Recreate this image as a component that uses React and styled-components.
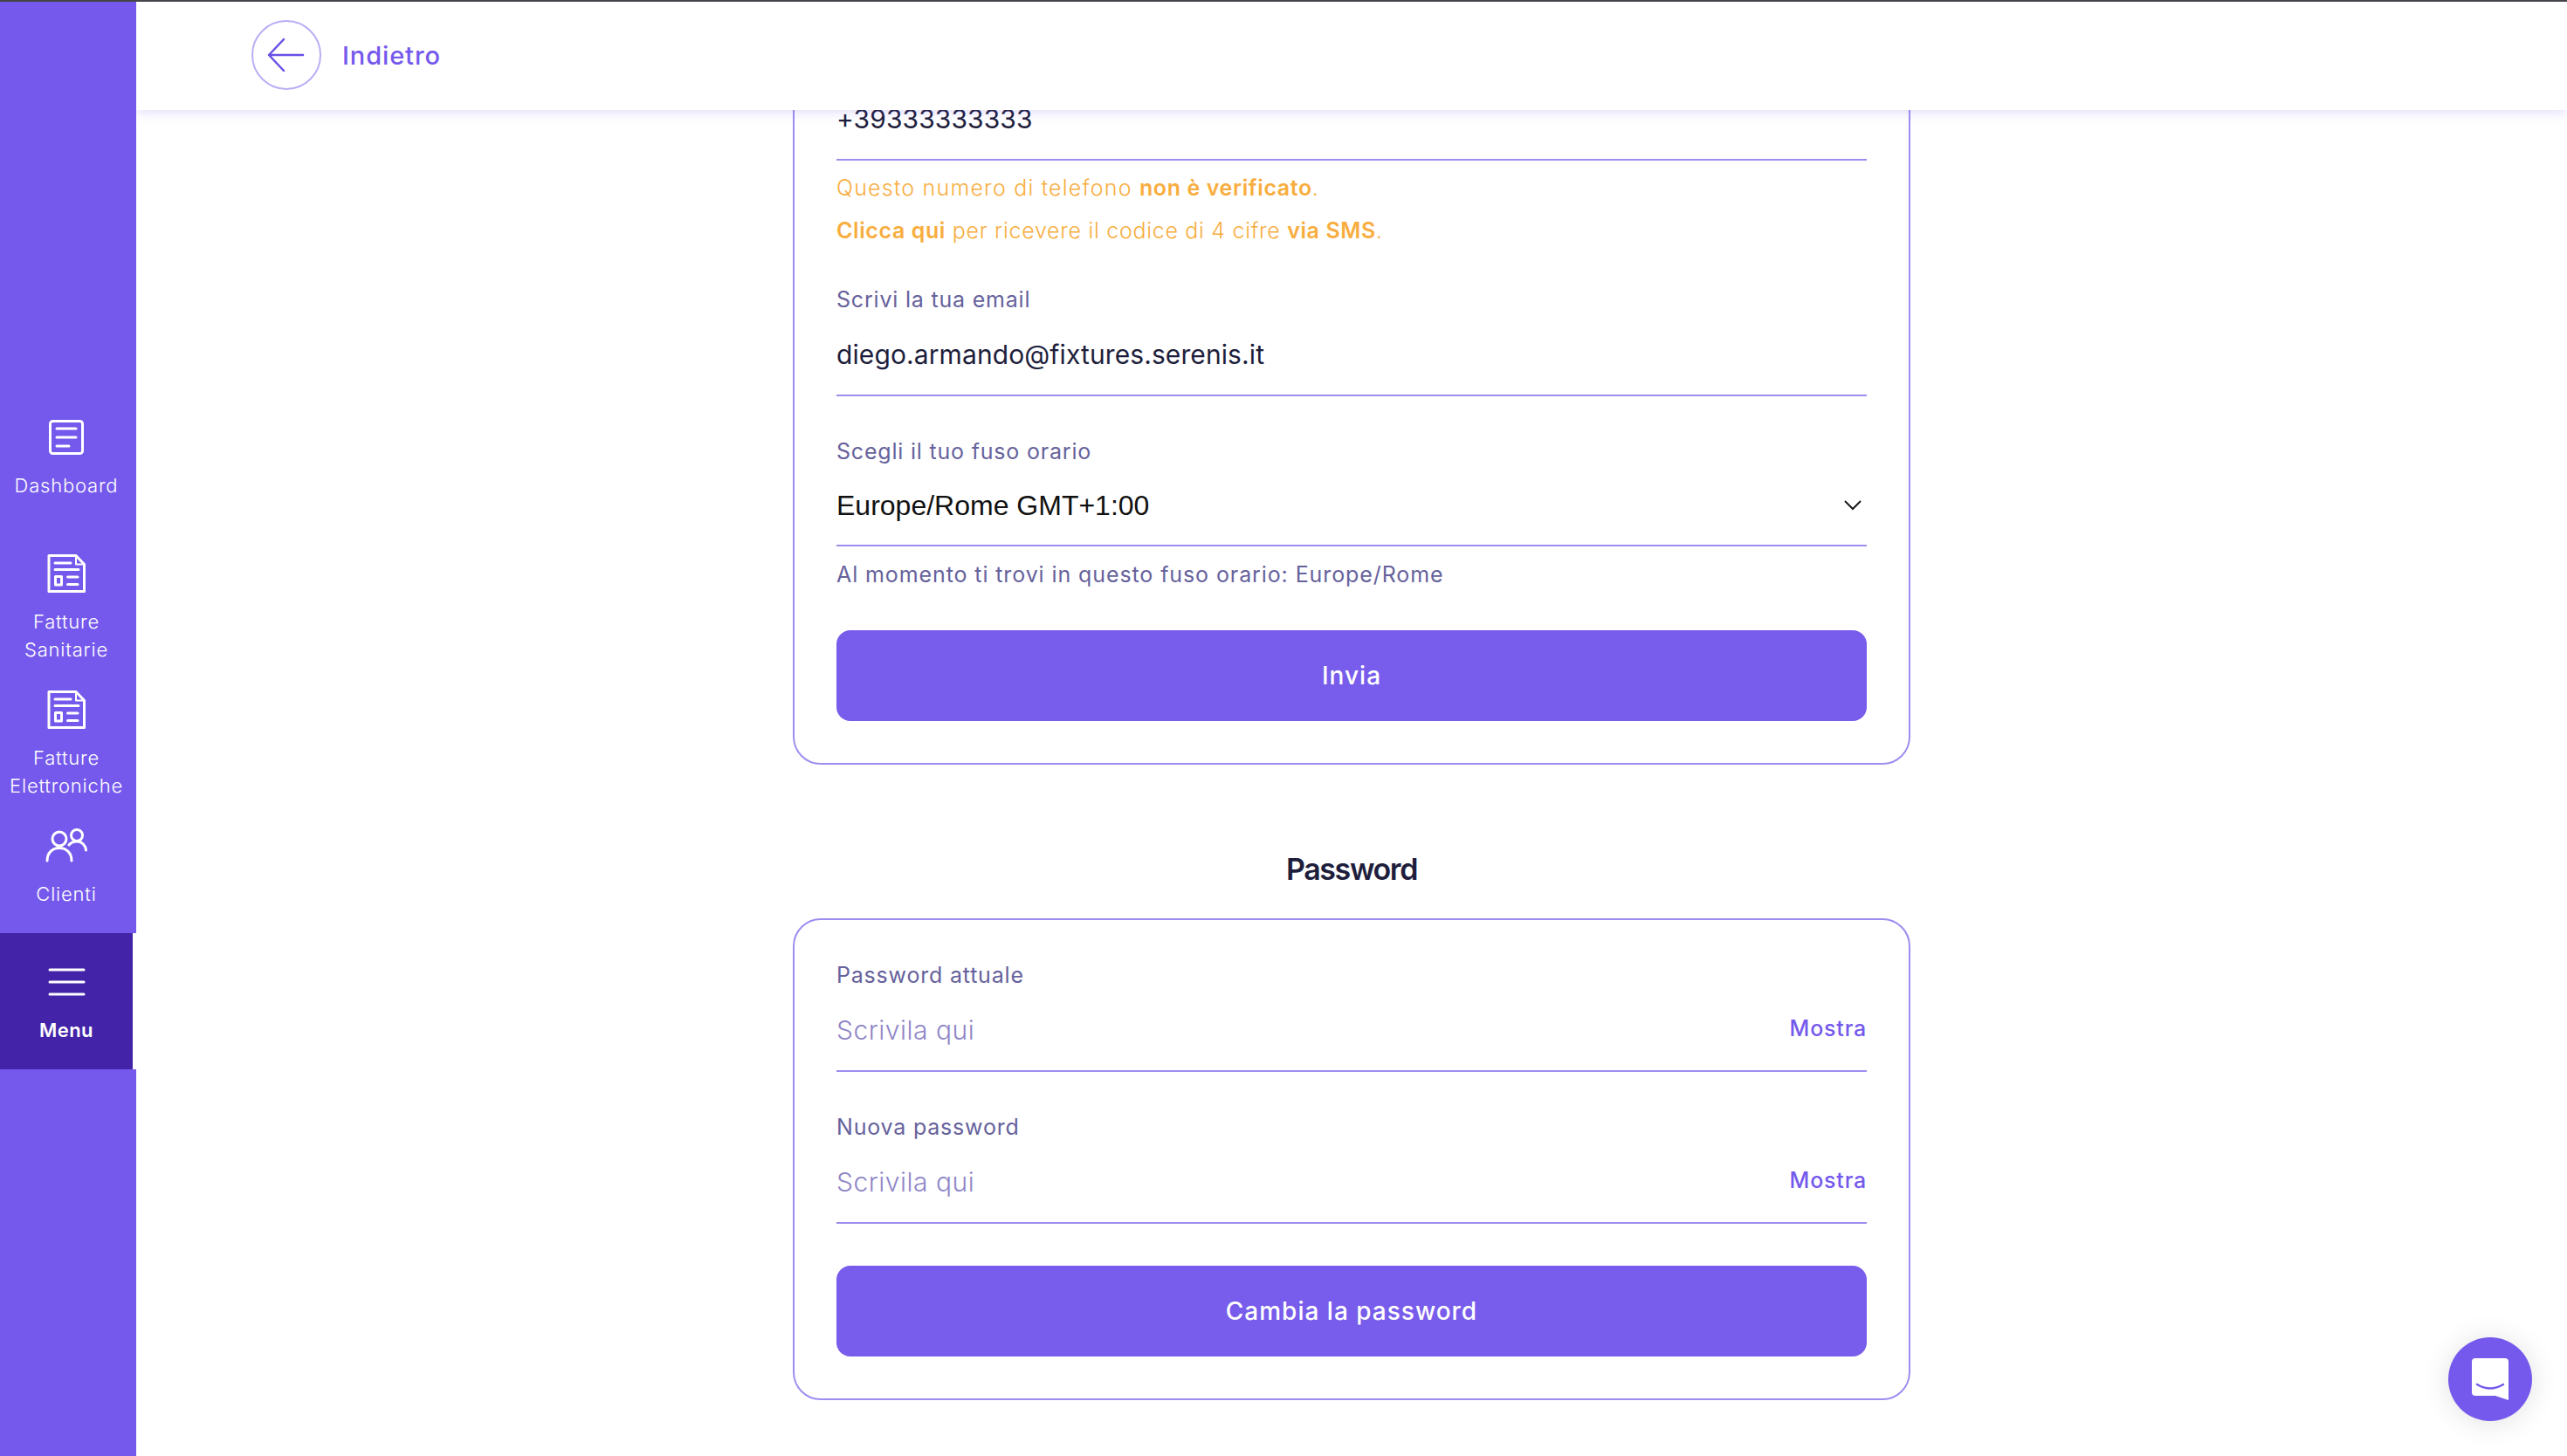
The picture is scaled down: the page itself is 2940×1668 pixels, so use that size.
import React from 'react';
import styled, { createGlobalStyle } from 'styled-components';

const GlobalStyle = createGlobalStyle`
  html, body {
    margin: 0;
    padding: 0;
    height: 100%;
    background: #fff;
    font-family: Inter, "Noto Sans", sans-serif;
  }
  #root {
    height: 100%;
  }
`;

const Page = styled.div`
  height: 1668px;
  display: flex;
  flex-direction: column;
  overflow: hidden;
  position: relative;
`;

const TopLine = styled.div`
  height: 2px;
  flex: none;
  background: #444;
`;

const Body = styled.div`
  flex: 1;
  min-height: 0;
  display: flex;
`;

const Sidebar = styled.nav`
  width: 156px;
  flex: none;
  position: relative;
  z-index: 3;
  background: #7559ec;
  display: flex;
  flex-direction: column;
  justify-content: center;
`;

const NavItem = styled.a`
  height: 156px;
  box-sizing: border-box;
  padding: 32px ${(p) => (p.$active ? 0 : 4)}px 0 0;
  display: flex;
  flex-direction: column;
  align-items: center;
  color: #fff;
  background: ${(p) => (p.$active ? '#4323a8' : 'transparent')};
  border-right: ${(p) => (p.$active ? '4px solid #fff' : 'none')};
`;

const NavIcon = styled.svg`
  width: 48px;
  height: 48px;
  flex: none;
  fill: none;
  stroke: #fff;
  stroke-width: 3;
  stroke-linecap: round;
  stroke-linejoin: round;
`;

const NavLabel = styled.span`
  margin-top: 15px;
  font-size: 22px;
  line-height: 32px;
  letter-spacing: ${(p) => (p.$active ? 0.4 : 0.8)}px;
  text-align: center;
  font-weight: ${(p) => (p.$active ? 600 : 300)};
  white-space: pre-line;
`;

const Main = styled.div`
  flex: 1;
  min-width: 0;
  display: flex;
  flex-direction: column;
`;

const Header = styled.header`
  height: 124px;
  flex: none;
  position: relative;
  z-index: 2;
  background: #fff;
  box-shadow: 0 3px 12px rgba(117, 89, 236, 0.2);
  display: flex;
  align-items: center;
  gap: 24px;
  padding: 0 0 0 132px;
`;

const BackCircle = styled.button`
  width: 80px;
  height: 80px;
  padding: 0;
  margin-top: -2px;
  border: 2px solid #b8aff5;
  border-radius: 50%;
  background: #fff;
  display: flex;
  align-items: center;
  justify-content: center;
`;

const BackLabel = styled.span`
  font-size: 29px;
  font-weight: 500;
  letter-spacing: 0.9px;
  color: #7559ec;
  margin-top: -2px;
`;

const Scroller = styled.main`
  flex: 1;
  min-height: 0;
  overflow: hidden;
  display: flex;
  flex-direction: column;
  justify-content: flex-end;
  align-items: center;
  padding-bottom: 64px;
`;

const Card = styled.section`
  width: 1280px;
  flex: none;
  box-sizing: border-box;
  border: 2px solid #9b8ef0;
  border-radius: 32px;
  padding: ${(p) => (p.$clipped ? 80 : 47)}px 48px 48px;
  display: flex;
  flex-direction: column;
`;

const SectionTitle = styled.h2`
  flex: none;
  margin: 96px 0 32px;
  font-size: 34px;
  line-height: 48px;
  font-weight: 600;
  letter-spacing: -1.4px;
  color: #1e1e3c;
`;

const FieldLabel = styled.div`
  font-size: 25px;
  line-height: 32px;
  font-weight: 400;
  letter-spacing: 0.8px;
  color: #66629c;
`;

const InputRow = styled.div`
  height: ${(p) => (p.$select ? 93 : 95)}px;
  box-sizing: border-box;
  padding-top: ${(p) => (p.$select ? 1 : 0)}px;
  border-bottom: 2px solid #9b8ef0;
  display: flex;
  align-items: center;
  justify-content: space-between;
`;

const Value = styled.span`
  font-size: 30px;
  letter-spacing: 0.1px;
  color: #1e1e3c;
`;

const SelectValue = styled.span`
  font-family: "Liberation Sans", Arial, sans-serif;
  font-size: 32px;
  color: #111;
`;

const Placeholder = styled.span`
  font-size: 30px;
  font-weight: 300;
  letter-spacing: 0.5px;
  color: #8f86c6;
`;

const ShowLink = styled.span`
  font-size: 25px;
  font-weight: 500;
  letter-spacing: 0.8px;
  color: #7559ec;
  margin-top: -4px;
`;

const Warning = styled.p`
  margin: ${(p) => p.$top}px 0 0;
  font-size: 25px;
  line-height: 32px;
  font-weight: 300;
  letter-spacing: ${(p) => p.$track}px;
  color: #f8ad3e;

  strong {
    font-weight: 600;
    letter-spacing: 0.6px;
  }
`;

const Hint = styled.p`
  margin: 16px 0 0;
  font-size: 25px;
  line-height: 32px;
  font-weight: 400;
  letter-spacing: 0.9px;
  color: #66629c;
`;

const Field = styled.div`
  margin-top: ${(p) => p.$top || 0}px;
`;

const SubmitButton = styled.button`
  height: 104px;
  margin-top: ${(p) => p.$top}px;
  border: 0;
  border-radius: 16px;
  background: #785ceb;
  color: #fff;
  font-family: inherit;
  font-size: 28px;
  font-weight: 500;
  letter-spacing: 1px;
`;

const ChatBubble = styled.div`
  position: absolute;
  right: 40px;
  bottom: 40px;
  z-index: 4;
  width: 96px;
  height: 96px;
  border-radius: 50%;
  background: #7559ec;
  box-shadow: 0 2px 32px rgba(0, 0, 0, 0.12);
`;

function DocIcon() {
  return (
    <NavIcon viewBox="0 0 48 48">
      <path d="M4 3.5h31l9.5 10v31h-40.500z" />
      <path d="M35 3.500v10h9.500" strokeWidth="2" />
      <path d="M11 12h18M11 19.500h27M25.500 28h11.500M25.500 36.500h11.500" />
      <rect x="11.500" y="27.500" width="7" height="9.500" />
    </NavIcon>
  );
}

const navItems = [
  {
    label: 'Dashboard',
    icon: (
      <NavIcon viewBox="0 0 48 48">
        <rect x="5.500" y="5.500" width="37" height="37" rx="3" />
        <path d="M13 14h22M13 24h22M13 34h14" />
      </NavIcon>
    ),
  },
  { label: 'Fatture\nSanitarie', icon: <DocIcon /> },
  { label: 'Fatture\nElettroniche', icon: <DocIcon /> },
  {
    label: 'Clienti',
    icon: (
      <NavIcon viewBox="0 0 48 48">
        <circle cx="16" cy="16" r="8" />
        <circle cx="36" cy="12" r="6.500" />
        <path d="M2 41C2 32 8 26.500 16 26.500S30 32 30 41" />
        <path d="M27 23C29.500 20 33 19 36 19C42 19 46 23.500 46.500 29" />
      </NavIcon>
    ),
  },
  {
    label: 'Menu',
    active: true,
    icon: (
      <NavIcon viewBox="0 0 48 48">
        <path d="M5 10h39M5 24h39M5 38h39" />
      </NavIcon>
    ),
  },
];

function App() {
  return (
    <Page>
      <GlobalStyle />
      <TopLine />
      <Body>
        <Sidebar>
          {navItems.map((item) => (
            <NavItem key={item.label} $active={item.active}>
              {item.icon}
              <NavLabel $active={item.active}>{item.label}</NavLabel>
            </NavItem>
          ))}
        </Sidebar>
        <Main>
          <Header>
            <BackCircle>
              <svg width="48" height="48" viewBox="0 0 48 48" fill="none" stroke="#6a4fe6" strokeWidth="2.500" strokeLinecap="round" strokeLinejoin="round">
                <path d="M43 24H4M21 6L4 24L21 42" />
              </svg>
            </BackCircle>
            <BackLabel>Indietro</BackLabel>
          </Header>
          <Scroller>
            <Card $clipped>
              <InputRow>
                <Value>+39333333333</Value>
              </InputRow>
              <Warning $top={15} $track={1.2}>
                Questo numero di telefono <strong>non è verificato</strong>.
              </Warning>
              <Warning $top={17} $track={0.7}>
                <strong>Clicca qui</strong> per ricevere il codice di 4 cifre <strong>via SMS</strong>.
              </Warning>
              <Field $top={47}>
                <FieldLabel>Scrivi la tua email</FieldLabel>
                <InputRow>
                  <Value>diego.armando@fixtures.serenis.it</Value>
                </InputRow>
              </Field>
              <Field $top={47}>
                <FieldLabel>Scegli il tuo fuso orario</FieldLabel>
                <InputRow $select>
                  <SelectValue>Europe/Rome GMT+1:00</SelectValue>
                  <svg width="32" height="32" viewBox="0 0 32 32" fill="none" stroke="#1a1a1a" strokeWidth="2">
                    <path d="M7 11L16 20L25 11" />
                  </svg>
                </InputRow>
              </Field>
              <Hint>Al momento ti trovi in questo fuso orario: Europe/Rome</Hint>
              <SubmitButton $top={48}>Invia</SubmitButton>
            </Card>
            <SectionTitle>Password</SectionTitle>
            <Card>
              <Field>
                <FieldLabel>Password attuale</FieldLabel>
                <InputRow>
                  <Placeholder>Scrivila qui</Placeholder>
                  <ShowLink>Mostra</ShowLink>
                </InputRow>
              </Field>
              <Field $top={47}>
                <FieldLabel>Nuova password</FieldLabel>
                <InputRow>
                  <Placeholder>Scrivila qui</Placeholder>
                  <ShowLink>Mostra</ShowLink>
                </InputRow>
              </Field>
              <SubmitButton $top={48}>Cambia la password</SubmitButton>
            </Card>
          </Scroller>
        </Main>
      </Body>
      <ChatBubble>
        <svg width="96" height="96" viewBox="0 0 96 96">
          <path d="M31 24H65a4 4 0 0 1 4 4V72L54 67H31a4 4 0 0 1-4-4V28a4 4 0 0 1 4-4z" fill="#fff" />
          <path d="M33 54Q48 63 63 54" fill="none" stroke="#7559ec" strokeWidth="2.500" strokeLinecap="round" />
        </svg>
      </ChatBubble>
    </Page>
  );
}

export default App;
